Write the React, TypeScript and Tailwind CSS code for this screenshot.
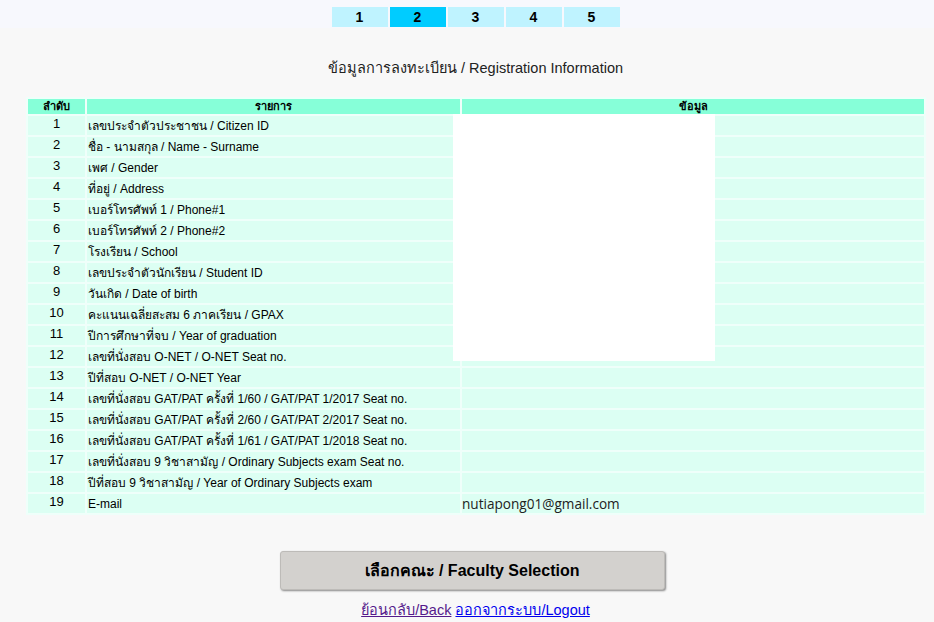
import React from "react";

const rows: { label: string; value?: string }[] = [
  { label: "เลขประจำตัวประชาชน / Citizen ID" },
  { label: "ชื่อ - นามสกุล / Name - Surname" },
  { label: "เพศ / Gender" },
  { label: "ที่อยู่ / Address" },
  { label: "เบอร์โทรศัพท์ 1 / Phone#1" },
  { label: "เบอร์โทรศัพท์ 2 / Phone#2" },
  { label: "โรงเรียน / School" },
  { label: "เลขประจำตัวนักเรียน / Student ID" },
  { label: "วันเกิด / Date of birth" },
  { label: "คะแนนเฉลี่ยสะสม 6 ภาคเรียน / GPAX" },
  { label: "ปีการศึกษาที่จบ / Year of graduation" },
  { label: "เลขที่นั่งสอบ O-NET / O-NET Seat no." },
  { label: "ปีที่สอบ O-NET / O-NET Year" },
  { label: "เลขที่นั่งสอบ GAT/PAT ครั้งที่ 1/60 / GAT/PAT 1/2017 Seat no." },
  { label: "เลขที่นั่งสอบ GAT/PAT ครั้งที่ 2/60 / GAT/PAT 2/2017 Seat no." },
  { label: "เลขที่นั่งสอบ GAT/PAT ครั้งที่ 1/61 / GAT/PAT 1/2018 Seat no." },
  { label: "เลขที่นั่งสอบ 9 วิชาสามัญ / Ordinary Subjects exam Seat no." },
  { label: "ปีที่สอบ 9 วิชาสามัญ / Year of Ordinary Subjects exam" },
  { label: "E-mail", value: "nutiapong01@gmail.com" },
];

const steps = ["1", "2", "3", "4", "5"];

export default function App() {
  return (
    <div className="min-h-[622px] bg-[#f8f8f8] font-['Liberation_Sans',Tahoma,sans-serif] text-black">
      {/* step tabs */}
      <div className="flex h-[28px] items-start justify-center gap-[2px] bg-[#f7f8fd] pt-[7px] pl-[17px]">
        {steps.map((s) => (
          <div
            key={s}
            className={`flex h-[20px] w-[56px] items-center justify-center text-[14px] font-bold ${
              s === "2" ? "bg-[#00ccff]" : "bg-[#bff3ff]"
            }`}
          >
            {s}
          </div>
        ))}
      </div>

      <div className="pt-[30px] pl-[17px] text-center text-[14.5px] text-[#222]">
        ข้อมูลการลงทะเบียน / Registration Information
      </div>

      <div className="relative mt-[17px] ml-[26px] w-[900px]">
        <table className="w-full table-fixed border-separate border-spacing-[2px] bg-[#effffa]">
          <colgroup>
            <col className="w-[57px]" />
            <col className="w-[373px]" />
            <col />
          </colgroup>
          <thead>
            <tr className="h-[15px]">
              <th className="bg-[#86ffd8] p-0 text-[11px] leading-[15px] font-bold">ลำดับ</th>
              <th className="bg-[#86ffd8] p-0 text-[11px] leading-[15px] font-bold">รายการ</th>
              <th className="bg-[#86ffd8] p-0 text-[11px] leading-[15px] font-bold">ข้อมูล</th>
            </tr>
          </thead>
          <tbody>
            {rows.map((r, i) => (
              <tr key={i} className="h-[19px]">
                <td className="bg-[#dcfff3] p-0 pb-[3px] text-center text-[13px] leading-[16px]">
                  {i + 1}
                </td>
                <td className="bg-[#dcfff3] p-0 pt-[2px] pl-[1px] text-[12px] leading-[17px]">
                  {r.label}
                </td>
                <td className="bg-[#dcfff3] p-0 text-[13.6px] leading-[19px] text-[#222] font-['Open_Sans',sans-serif]">
                  {r.value ?? ""}
                </td>
              </tr>
            ))}
          </tbody>
        </table>
        {/* blanked-out personal data */}
        <div className="absolute top-[17px] left-[427px] h-[247px] w-[262px] bg-white" />
      </div>

      <div className="mt-[36px] flex justify-center pl-[10px]">
        <button className="h-[39px] w-[385px] rounded-[3px] border border-[#bdbbb8] bg-[#d3d1ce] pt-[2px] text-[16px] font-bold shadow-[1px_1px_2px_rgba(0,0,0,0.45)]">
          เลือกคณะ / Faculty Selection
        </button>
      </div>

      <div className="mt-[10px] pl-[17px] text-center text-[14.5px]">
        <a href="#" className="text-[#551a8b] underline">
          ย้อนกลับ/Back
        </a>{" "}
        <a href="#" className="text-[#0000ee] underline">
          ออกจากระบบ/Logout
        </a>
      </div>
    </div>
  );
}
